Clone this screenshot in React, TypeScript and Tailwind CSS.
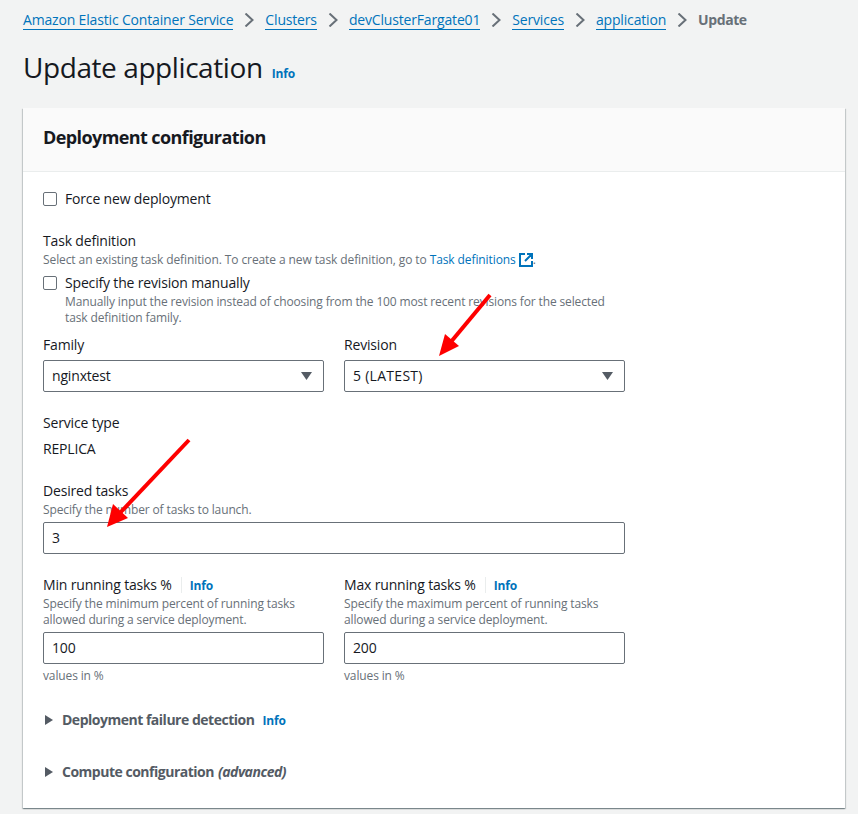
const crumbs = ["Amazon Elastic Container Service", "Clusters", "devClusterFargate01", "Services", "application"];

function Info({ className = "" }: { className?: string }) {
  return <span className={`text-[12px] leading-4 font-bold tracking-[-0.01em] text-[#0073bb] ${className}`}>Info</span>;
}

function Checkbox() {
  return <span className="block w-[14px] h-[14px] shrink-0 rounded-[2px] border border-[#687078] bg-white" />;
}

function Select({ value, className = "" }: { value: string; className?: string }) {
  return (
    <div className="mt-[5px] flex h-8 items-center justify-between rounded-[2px] border border-[#687078] bg-white pl-2 pr-[11px]">
      <span className={className}>{value}</span>
      <svg width="11" height="8" viewBox="0 0 11 8">
        <path d="M0 0h11L5.5 8z" fill="#545b64" />
      </svg>
    </div>
  );
}

function TextInput({ value, className = "" }: { value: string; className?: string }) {
  return (
    <div className={`flex h-8 items-center rounded-[2px] border border-[#687078] bg-white pl-2 ${className}`}>{value}</div>
  );
}

function Hint({ children, className = "" }: { children: React.ReactNode; className?: string }) {
  return <p className={`text-[12px] leading-4 tracking-[-0.011em] pt-px -mb-px text-[#687078] ${className}`}>{children}</p>;
}

function PercentField({ label, desc }: { label: string; desc: string[] }) {
  return (
    <div>
      <div className="flex items-center">
        <span>{label}</span>
        <span className="ml-[9px] h-4 border-l border-[#eaeded]" />
        <Info className="ml-2 translate-y-px" />
      </div>
      <Hint>
        {desc[0]}
        <br />
        {desc[1]}
      </Hint>
    </div>
  );
}

function Expander({ children }: { children: React.ReactNode }) {
  return (
    <div className="flex items-center font-bold tracking-[-0.035em] text-[#545b64]">
      <svg width="8" height="10" viewBox="0 0 8 10" className="ml-[2px] mr-[9px]">
        <path d="M0 0L8 5L0 10z" fill="#545b64" />
      </svg>
      {children}
    </div>
  );
}

export default function App() {
  return (
    <div
      className="relative h-[814px] w-[858px] overflow-hidden bg-[#f2f3f3] text-[14px] leading-5 tracking-[-0.012em] text-[#16191f]"
      style={{ fontFamily: '"Open Sans", "Noto Sans", sans-serif' }}
    >
      <div className="px-[23px] pt-[10px]">
        <nav className="flex h-5 items-center">
          {crumbs.map((c) => (
            <div key={c} className="flex items-center">
              <span className="border-b border-[#0073bb] leading-[19px] text-[#0073bb]">{c}</span>
              <svg width="10" height="14" viewBox="0 0 10 14" className="mx-[11px]" fill="none" stroke="#687078" strokeWidth="2">
                <path d="M1.5 0.5L8.5 7L1.5 13.5" />
              </svg>
            </div>
          ))}
          <span className="font-bold tracking-[-0.03em] text-[#687078]">Update</span>
        </nav>

        <div className="mt-[17px] flex items-baseline">
          <h1 className="text-[28px] leading-10 font-normal tracking-[-0.015em]">Update application</h1>
          <Info className="ml-[9px]" />
        </div>

        <section className="mt-[21px] w-[822px] bg-white shadow-[0_1px_1px_0_rgba(0,28,36,0.3),1px_1px_1px_0_rgba(0,28,36,0.15),-1px_1px_1px_0_rgba(0,28,36,0.15)]">
          <header className="flex h-[64px] items-center border-b border-[#eaeded] bg-[#fafafa] px-5 pb-[6px]">
            <h2 className="text-[18px] leading-[22px] font-bold tracking-[-0.033em]">Deployment configuration</h2>
          </header>

          <div className="w-[622px] px-5 pt-[17px] pb-[26px]">
            <label className="flex items-center gap-2">
              <Checkbox />
              <span>Force new deployment</span>
            </label>

            <div className="mt-[22px]">Task definition</div>
            <Hint>
              <span className="tracking-[-0.008em]">
                Select an existing task definition. To create a new task definition, go to{" "}
                <span className="text-[#0073bb]">Task definitions</span>{" "}
              </span>
              <svg width="14" height="14" viewBox="0 0 14 14" className="inline-block align-[-3px]" fill="none" stroke="#0073bb" strokeWidth="2">
                <path d="M6 1H1v12h12V8M8 1h5v5M13 1L6 8" />
              </svg>
              .
            </Hint>

            <label className="mt-[6px] flex items-center gap-2">
              <Checkbox />
              <span>Specify the revision manually</span>
            </label>
            <Hint className="ml-[22px]">
              Manually input the revision instead of choosing from the 100 most recent revisions for the selected
              <br />
              task definition family.
            </Hint>

            <div className="mt-[10px] grid grid-cols-2 gap-x-5">
              <div>
                <div>Family</div>
                <Select value="nginxtest" />
              </div>
              <div>
                <div>Revision</div>
                <Select value="5 (LATEST)" className="tracking-[0.02em]" />
              </div>
            </div>

            <div className="mt-[21px]">Service type</div>
            <div className="mt-[6px]">REPLICA</div>

            <div className="mt-[22px]">Desired tasks</div>
            <Hint>Specify the number of tasks to launch.</Hint>
            <TextInput value="3" className="mt-[5px]" />

            <div className="mt-[21px] grid grid-cols-2 gap-x-5">
              <div>
                <PercentField
                  label="Min running tasks %"
                  desc={["Specify the minimum percent of running tasks", "allowed during a service deployment."]}
                />
                <TextInput value="100" className="mt-[5px]" />
                <Hint className="mt-[3px]">values in %</Hint>
              </div>
              <div>
                <PercentField
                  label="Max running tasks %"
                  desc={["Specify the maximum percent of running tasks", "allowed during a service deployment."]}
                />
                <TextInput value="200" className="mt-[5px]" />
                <Hint className="mt-[3px]">values in %</Hint>
              </div>
            </div>

            <div className="mt-[27px]">
              <Expander>
                Deployment failure detection
                <Info className="ml-2 translate-y-px" />
              </Expander>
            </div>
            <div className="mt-8">
              <Expander>
                <span>Compute configuration</span>
                <em className="ml-1">(advanced)</em>
              </Expander>
            </div>
          </div>
        </section>
      </div>

      {/* red annotation arrows drawn over the screenshot */}
      <svg width="858" height="814" viewBox="0 0 858 814" className="pointer-events-none absolute top-0 left-0">
        <path d="M490 295L450 343" stroke="#fe0000" strokeWidth="4" />
        <path d="M439 356L445 334L459 346z" fill="#fe0000" />
        <path d="M189 440L119 514" stroke="#fe0000" strokeWidth="4" />
        <path d="M107 527L113 504L128 518z" fill="#fe0000" />
      </svg>
    </div>
  );
}
